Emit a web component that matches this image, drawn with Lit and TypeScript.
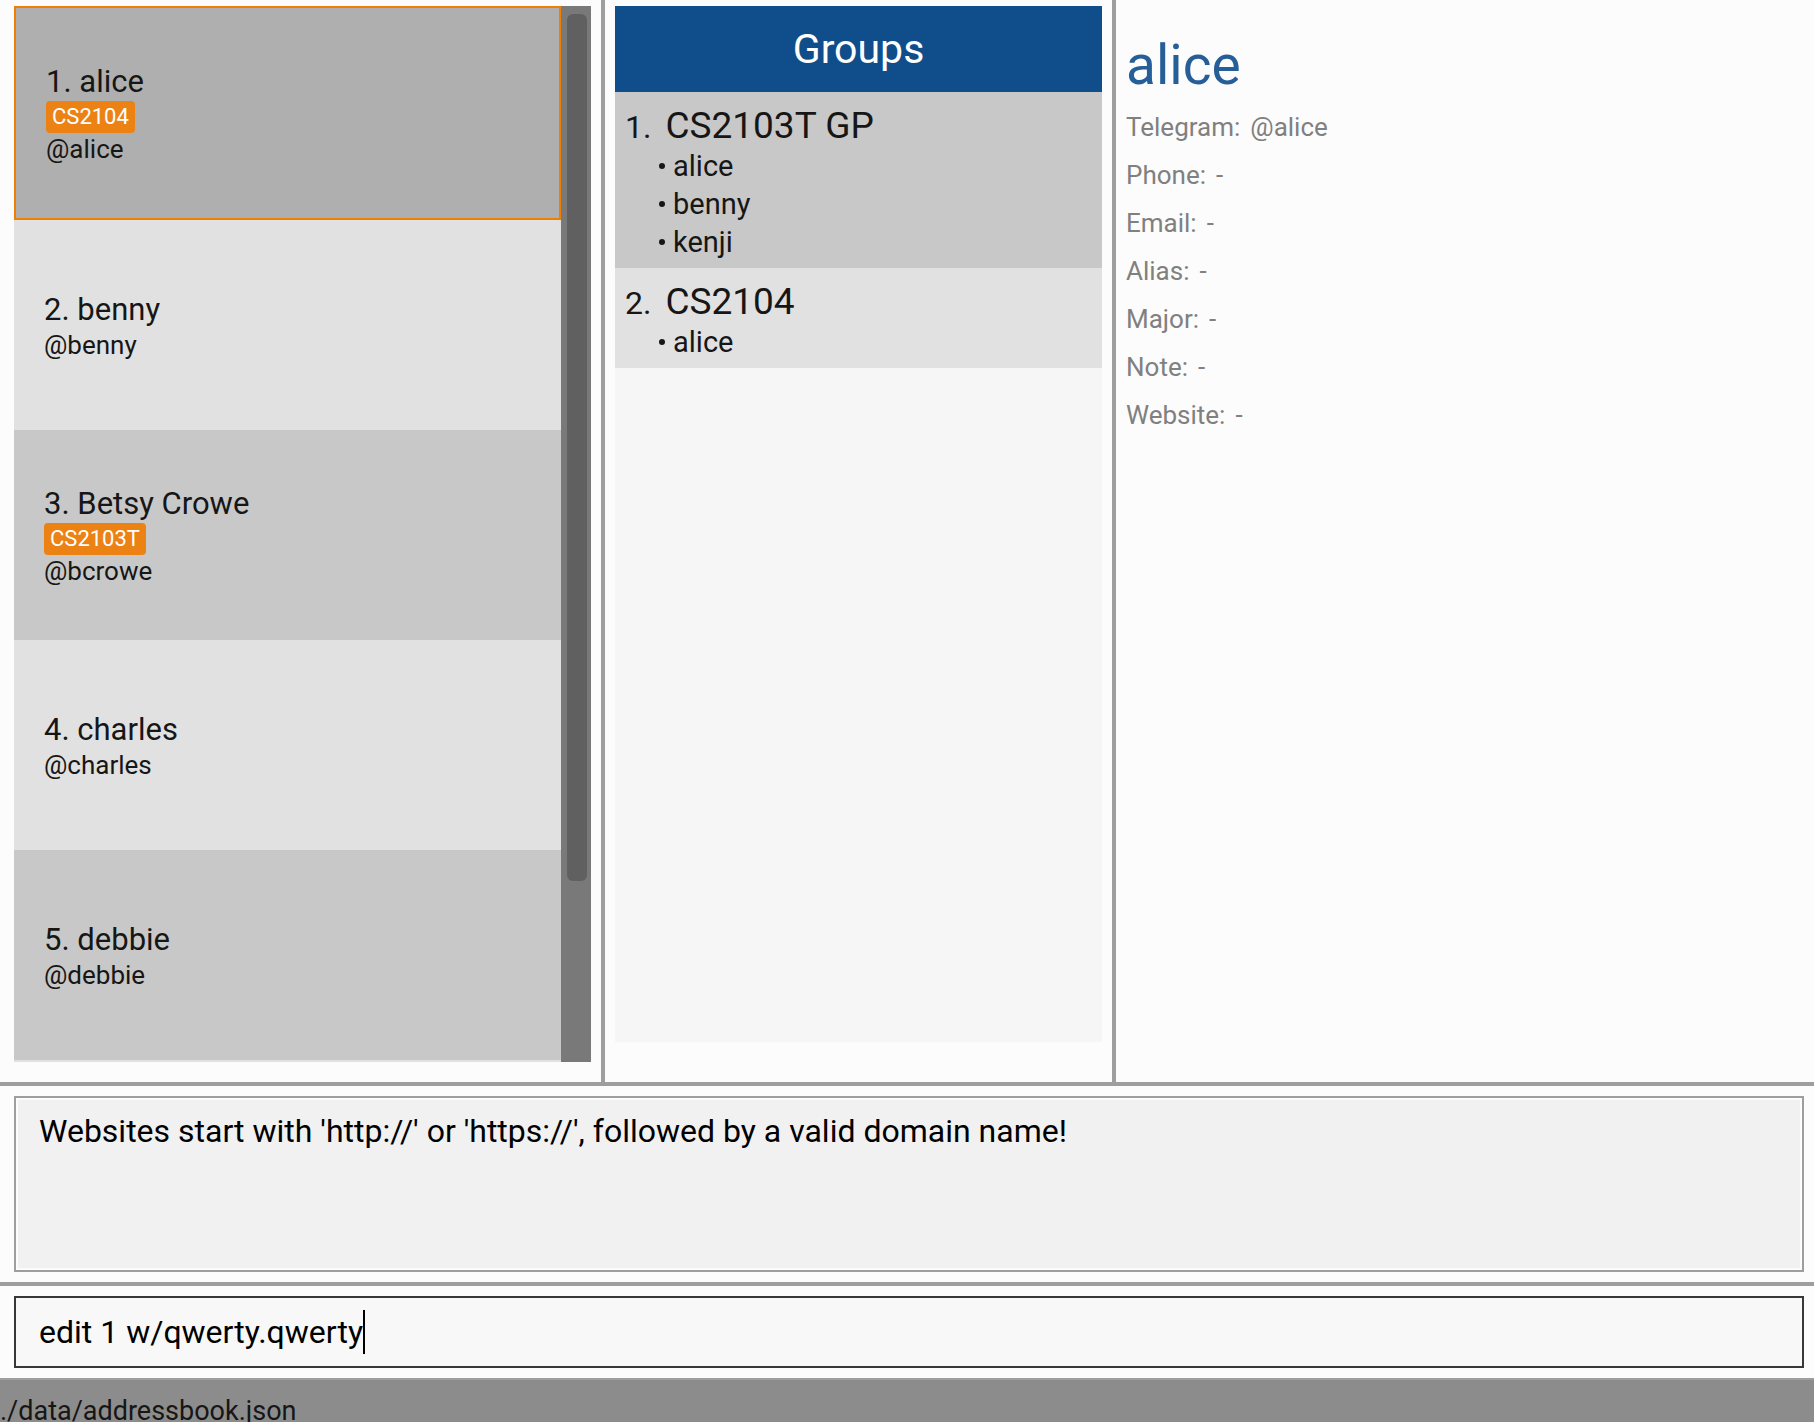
import { LitElement, html, css } from "lit";
import { customElement, property, state } from "lit/decorators.js";

interface Person {
  name: string;
  handle: string;
  tags: string[];
}

interface Group {
  name: string;
  members: string[];
}

const PERSONS: Person[] = [
  { name: "alice", handle: "@alice", tags: ["CS2104"] },
  { name: "benny", handle: "@benny", tags: [] },
  { name: "Betsy Crowe", handle: "@bcrowe", tags: ["CS2103T"] },
  { name: "charles", handle: "@charles", tags: [] },
  { name: "debbie", handle: "@debbie", tags: [] },
];

const GROUPS: Group[] = [
  { name: "CS2103T GP", members: ["alice", "benny", "kenji"] },
  { name: "CS2104", members: ["alice"] },
];

const DETAILS: [string, string][] = [
  ["Telegram:", "@alice"],
  ["Phone:", "-"],
  ["Email:", "-"],
  ["Alias:", "-"],
  ["Major:", "-"],
  ["Note:", "-"],
  ["Website:", "-"],
];

@customElement("person-list")
class PersonList extends LitElement {
  @property({ attribute: false }) persons: Person[] = [];
  @property({ type: Number }) selected = 0;

  static styles = css`
    :host {
      display: flex;
      min-height: 0;
      padding: 6px 10px 20px 14px;
    }
    .list {
      flex: 1;
      min-width: 0;
      margin: 0;
      padding: 0;
      list-style: none;
      overflow: hidden;
      background: #e1e1e1;
    }
    .cell {
      display: flex;
      flex-direction: column;
      justify-content: center;
      align-items: flex-start;
      min-height: 208px;
      padding: 2px 0 0 30px;
      background: #e1e1e1;
      color: #161616;
    }
    .cell:nth-child(odd) {
      background: #c8c8c8;
    }
    .cell.selected {
      background: #afafaf;
      border: 2px solid #ee7f00;
    }
    .name {
      font-size: 31px;
      line-height: 38px;
    }
    .tag {
      padding: 0 6px;
      border-radius: 4px;
      background: #ec8214;
      color: #fff;
      font-size: 22px;
      line-height: 32px;
    }
    .handle {
      font-size: 26px;
      line-height: 32px;
    }
    .track {
      box-sizing: border-box;
      display: grid;
      grid-template-rows: 867fr 173fr;
      width: 30px;
      padding: 8px 4px 8px 6px;
      background: #797979;
    }
    .thumb {
      border-radius: 6px;
      background: #606060;
    }
  `;

  render() {
    return html`
      <ul class="list">
        ${this.persons.map(
          (p, i) => html`
            <li class="cell ${i === this.selected ? "selected" : ""}">
              <span class="name">${i + 1}. ${p.name}</span>
              ${p.tags.map((t) => html`<span class="tag">${t}</span>`)}
              <span class="handle">${p.handle}</span>
            </li>
          `
        )}
      </ul>
      <div class="track"><div class="thumb"></div></div>
    `;
  }
}

@customElement("group-list")
class GroupList extends LitElement {
  @property({ attribute: false }) groups: Group[] = [];

  static styles = css`
    :host {
      display: flex;
      flex-direction: column;
      min-height: 0;
      padding: 6px 10px 40px;
    }
    .title {
      margin: 0;
      background: #0f4e8a;
      color: #fff;
      font-size: 41px;
      font-weight: 400;
      line-height: 86px;
      text-align: center;
    }
    .groups {
      flex: 1;
      margin: 0;
      padding: 0;
      list-style: none;
      overflow: hidden;
      background: #f6f6f6;
      color: #161616;
    }
    .group {
      padding: 12px 10px 7px;
      background: #e1e1e1;
    }
    .group:nth-child(odd) {
      background: #c8c8c8;
    }
    .head {
      display: flex;
      align-items: baseline;
      gap: 14px;
      height: 43px;
      line-height: 43px;
    }
    .index {
      font-size: 32px;
    }
    .name {
      font-size: 37px;
    }
    .members {
      margin: 0;
      padding: 0 0 0 34px;
      list-style: none;
    }
    .member {
      display: flex;
      align-items: center;
      gap: 8px;
      font-size: 29px;
      line-height: 38px;
    }
    .member::before {
      content: "";
      width: 6px;
      height: 6px;
      border-radius: 50%;
      background: #161616;
    }
  `;

  render() {
    return html`
      <h2 class="title">Groups</h2>
      <ol class="groups">
        ${this.groups.map(
          (g, i) => html`
            <li class="group">
              <div class="head">
                <span class="index">${i + 1}.</span>
                <span class="name">${g.name}</span>
              </div>
              <ul class="members">
                ${g.members.map((m) => html`<li class="member">${m}</li>`)}
              </ul>
            </li>
          `
        )}
      </ol>
    `;
  }
}

@customElement("person-details")
class PersonDetails extends LitElement {
  @property() name = "";
  @property({ attribute: false }) fields: [string, string][] = [];

  static styles = css`
    :host {
      display: block;
      padding: 29px 10px;
    }
    .name {
      margin: 0 0 2px;
      color: #265e98;
      font-size: 55px;
      font-weight: 400;
      line-height: 72px;
    }
    .fields {
      margin: 0;
    }
    .field {
      display: flex;
      gap: 10px;
      color: #808080;
      font-size: 26px;
      line-height: 48px;
    }
    .value {
      margin: 0;
    }
  `;

  render() {
    return html`
      <h1 class="name">${this.name}</h1>
      <dl class="fields">
        ${this.fields.map(
          ([label, value]) => html`
            <div class="field">
              <dt>${label}</dt>
              <dd class="value">${value}</dd>
            </div>
          `
        )}
      </dl>
    `;
  }
}

@customElement("app-root")
class AppRoot extends LitElement {
  @state() private command = "edit 1 w/qwerty.qwerty";

  static styles = css`
    :host {
      display: flex;
      flex-direction: column;
      height: 100vh;
      overflow: hidden;
      background: #fcfcfc;
      font-family: Roboto, "Liberation Sans", sans-serif;
    }
    .panes {
      flex: 1;
      min-height: 0;
      display: grid;
      grid-template-columns: 601fr 4px 507fr 4px 698fr;
      grid-template-rows: 100%;
    }
    .divider {
      background: #9e9e9e;
    }
    .row {
      border-top: 4px solid #9e9e9e;
      padding: 10px 10px 10px 14px;
    }
    .result {
      display: block;
      box-sizing: border-box;
      width: 100%;
      height: 176px;
      padding: 13px 23px;
      border: 2px solid #9e9e9e;
      border-radius: 0;
      outline: none;
      resize: none;
      background: #f1f1f1;
      box-shadow: inset 0 0 0 2px #fcfcfc;
      color: #000;
      font: inherit;
      font-size: 32px;
      line-height: 40px;
    }
    .command {
      position: relative;
      font-size: 32px;
      line-height: 44px;
    }
    .input {
      display: block;
      box-sizing: border-box;
      width: 100%;
      height: 72px;
      padding: 0 23px;
      border: 2px solid #383838;
      border-radius: 0;
      outline: none;
      background: #f8f8f8;
      caret-color: transparent;
      color: #000;
      font: inherit;
    }
    .caret {
      position: absolute;
      top: 14px;
      left: 25px;
      color: transparent;
      white-space: pre;
      pointer-events: none;
      border-right: 2px solid #000;
    }
    .status {
      box-sizing: border-box;
      height: 44px;
      overflow: hidden;
      padding: 12px 0 0;
      border-top: 2px solid #9e9e9e;
      background: #8c8c8c;
      color: #161616;
      font-size: 27px;
      line-height: 38px;
    }
  `;

  private onInput(e: Event) {
    this.command = (e.target as HTMLInputElement).value;
  }

  render() {
    return html`
      <main class="panes">
        <person-list .persons=${PERSONS} .selected=${0}></person-list>
        <div class="divider"></div>
        <group-list .groups=${GROUPS}></group-list>
        <div class="divider"></div>
        <person-details .name=${PERSONS[0].name} .fields=${DETAILS}></person-details>
      </main>
      <section class="row">
        <textarea
          class="result"
          readonly
          aria-label="Result"
          .value=${"Websites start with 'http://' or 'https://', followed by a valid domain name!"}
        ></textarea>
      </section>
      <section class="row">
        <div class="command">
          <input
            class="input"
            type="text"
            aria-label="Command"
            spellcheck="false"
            .value=${this.command}
            @input=${this.onInput}
          />
          <span class="caret" aria-hidden="true">${this.command}</span>
        </div>
      </section>
      <footer class="status">./data/addressbook.json</footer>
    `;
  }
}
